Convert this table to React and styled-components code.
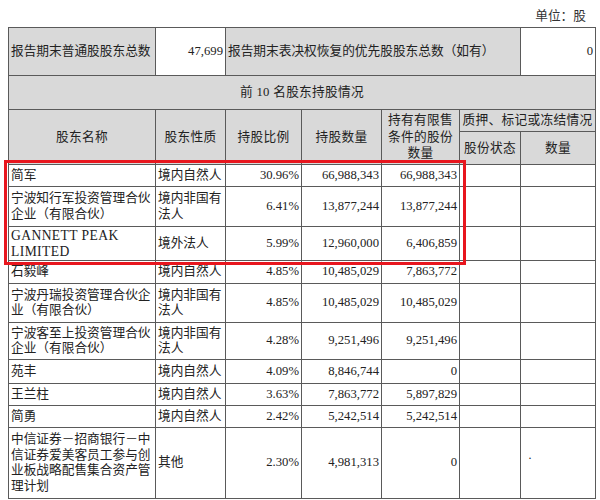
import React from 'react';
import styled, { createGlobalStyle } from 'styled-components';

const GlobalStyle = createGlobalStyle`
  html, body {
    margin: 0;
    padding: 0;
    background: #ffffff;
  }
`;

const Page = styled.div`
  position: relative;
  width: 600px;
  height: 500px;
  padding: 8px 0 0 8px;
  box-sizing: border-box;
  overflow: hidden;
  font-family: "Liberation Serif", "Noto Sans CJK SC", serif;
  color: #222;
`;

const Unit = styled.div`
  width: 587px;
  height: 19px;
  padding-right: 9px;
  box-sizing: border-box;
  text-align: right;
  font-size: 12.7px;
  line-height: 16px;
  color: #333;
`;

const Table = styled.table`
  border-collapse: collapse;
  table-layout: fixed;
  width: 587px;
  font-size: 12.7px;
`;

const Row = styled.tr`
  height: ${(p) => p.$h}px;
`;

const Cell = styled.td`
  border: 1px solid #5a5a5a;
  background: ${(p) => (p.$grey ? '#d9d9d9' : '#ffffff')};
  text-align: ${(p) => p.$align || 'left'};
  vertical-align: middle;
  padding: 0 2px 0 2px;
  line-height: 15.5px;
  white-space: ${(p) => (p.$nowrap ? 'nowrap' : 'normal')};
  overflow: hidden;
  word-break: break-all;
`;

const HeadCell = styled(Cell)`
  line-height: 16.5px;
  text-align: center;
  letter-spacing: 0.3px;
`;

const NameCell = styled(Cell)`
  padding: 0 0 0 2px;
  word-break: ${(p) => (p.$latin ? 'normal' : 'break-all')};
  font-size: ${(p) => (p.$latin ? '13.6px' : '12.7px')};
  letter-spacing: ${(p) => (p.$latin ? '0.4px' : '0')};
`;

const Dot = styled.span`
  display: block;
  padding-left: 5px;
  margin-top: -8px;
  font-size: 12px;
`;

const Highlight = styled.div`
  position: absolute;
  left: 4px;
  top: 160px;
  width: 462px;
  height: 105px;
  border: 3px solid #e8161e;
  box-sizing: border-box;
  pointer-events: none;
`;

const holders = [
  { name: '简军', kind: '境内自然人', ratio: '30.96%', qty: '66,988,343', limited: '66,988,343', h: 22 },
  { name: '宁波知行军投资管理合伙企业（有限合伙）', kind: '境内非国有法人', ratio: '6.41%', qty: '13,877,244', limited: '13,877,244', h: 40 },
  { name: 'GANNETT PEAK LIMITED', kind: '境外法人', ratio: '5.99%', qty: '12,960,000', limited: '6,406,859', h: 34, latin: true },
  { name: '石毅峰', kind: '境内自然人', ratio: '4.85%', qty: '10,485,029', limited: '7,863,772', h: 23 },
  { name: '宁波丹瑞投资管理合伙企业（有限合伙）', kind: '境内非国有法人', ratio: '4.85%', qty: '10,485,029', limited: '10,485,029', h: 39 },
  { name: '宁波客至上投资管理合伙企业（有限合伙）', kind: '境内非国有法人', ratio: '4.28%', qty: '9,251,496', limited: '9,251,496', h: 37 },
  { name: '苑丰', kind: '境内自然人', ratio: '4.09%', qty: '8,846,744', limited: '0', h: 24 },
  { name: '王兰柱', kind: '境内自然人', ratio: '3.63%', qty: '7,863,772', limited: '5,897,829', h: 22 },
  { name: '简勇', kind: '境内自然人', ratio: '2.42%', qty: '5,242,514', limited: '5,242,514', h: 22 },
  { name: '中信证券－招商银行－中信证券爱美客员工参与创业板战略配售集合资产管理计划', kind: '其他', ratio: '2.30%', qty: '4,981,313', limited: '0', h: 71, dot: true },
];

function HolderRow({ holder }) {
  const { name, kind, ratio, qty, limited, h, latin, dot } = holder;
  return (
    <Row $h={ h }>
      <NameCell $latin={ latin }>{ name }</NameCell>
      <Cell>{ kind }</Cell>
      <Cell $align="right">{ ratio }</Cell>
      <Cell $align="right">{ qty }</Cell>
      <Cell $align="right">{ limited }</Cell>
      <Cell />
      <Cell>{ dot ? <Dot>·</Dot> : null }</Cell>
    </Row>
  );
}

export default function App() {
  return (
    <Page>
      <GlobalStyle />
      <Unit>单位：股</Unit>
      <Table>
        <colgroup>
          <col style={ { width: 147 } } />
          <col style={ { width: 70 } } />
          <col style={ { width: 76 } } />
          <col style={ { width: 80 } } />
          <col style={ { width: 78 } } />
          <col style={ { width: 61 } } />
          <col style={ { width: 75 } } />
        </colgroup>
        <tbody>
          <Row $h={ 48 }>
            <Cell $grey $nowrap>报告期末普通股股东总数</Cell>
            <Cell $align="right">47,699</Cell>
            <Cell $grey $nowrap colSpan={ 4 }>报告期末表决权恢复的优先股股东总数（如有）</Cell>
            <Cell $align="right">0</Cell>
          </Row>
          <Row $h={ 34 }>
            <HeadCell $grey colSpan={ 7 }>前 10 名股东持股情况</HeadCell>
          </Row>
          <Row $h={ 22 }>
            <HeadCell $grey rowSpan={ 2 }>股东名称</HeadCell>
            <HeadCell $grey rowSpan={ 2 }>股东性质</HeadCell>
            <HeadCell $grey rowSpan={ 2 }>持股比例</HeadCell>
            <HeadCell $grey rowSpan={ 2 }>持股数量</HeadCell>
            <HeadCell $grey rowSpan={ 2 }>持有有限售条件的股份数量</HeadCell>
            <HeadCell $grey $nowrap colSpan={ 2 }>质押、标记或冻结情况</HeadCell>
          </Row>
          <Row $h={ 33 }>
            <HeadCell $grey>股份状态</HeadCell>
            <HeadCell $grey>数量</HeadCell>
          </Row>
          { holders.map((holder) => (
            <HolderRow key={ holder.name } holder={ holder } />
          )) }
        </tbody>
      </Table>
      <Highlight />
    </Page>
  );
}
